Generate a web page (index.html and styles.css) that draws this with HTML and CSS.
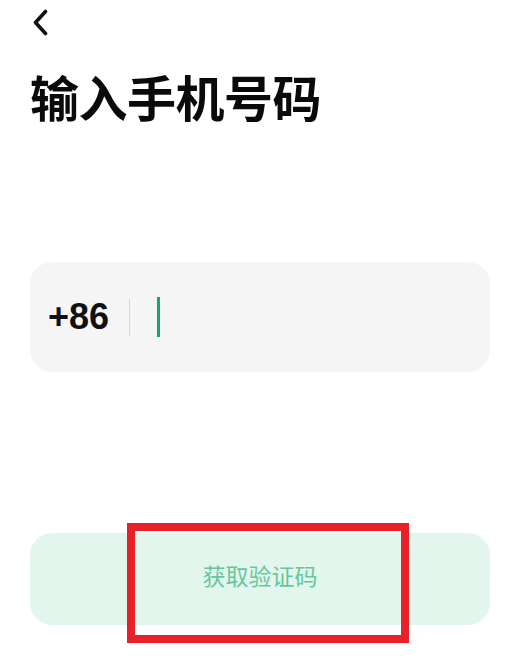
FILE: index.html
```html
<!DOCTYPE html>
<html lang="zh-CN">
<head>
    <meta charset="UTF-8">
    <meta name="viewport" content="width=device-width, initial-scale=1.0">
    <title>输入手机号码</title>
    <link rel="stylesheet" href="styles.css">
</head>
<body>
    <div class="page">
        <div class="top-bar">
            <svg class="back" width="17" height="27" viewBox="0 0 17 27">
                <path d="M13.5 2.5 L3.5 13.5 L13.5 24.5" fill="none" stroke="#111" stroke-width="3.6" stroke-linecap="round" stroke-linejoin="round"/>
            </svg>
        </div>

        <h1 class="title">输入手机号码</h1>

        <div class="phone-field">
            <span class="code">+86</span>
            <span class="divider"></span>
            <span class="caret"></span>
        </div>

        <div class="submit-wrap">
            <button class="submit">获取验证码</button>
            <div class="highlight"></div>
        </div>
    </div>
</body>
</html>
```

FILE: styles.css
```css
body {
    margin: 0;
    background: #fff;
    font-family: "Noto Sans CJK SC", "Noto Sans", sans-serif;
    color: #111;
}

.page {
    width: 510px;
    height: 671px;
    padding: 0 20px 0 30px;
    box-sizing: border-box;
    overflow: hidden;
}

.top-bar {
    height: 46px;
    display: flex;
    align-items: flex-start;
    padding-top: 9px;
    box-sizing: border-box;
}

.back {
    display: block;
    margin-left: 2px;
}

.title {
    margin: 15px 0 0;
    font-size: 49px;
    font-weight: 700;
    line-height: 70px;
    letter-spacing: -0.5px;
    color: #0a0a0a;
}

.phone-field {
    margin-top: 131px;
    height: 110px;
    background-color: #f5f5f5;
    border-radius: 22px;
    display: flex;
    align-items: center;
    padding-left: 18px;
}

.code {
    font-family: "Liberation Sans", Arial, sans-serif;
    font-size: 36px;
    font-weight: 700;
    color: #111;
    line-height: 1;
}

.divider {
    width: 1px;
    height: 37px;
    background-color: #d6d6d6;
    margin-left: 20px;
}

.caret {
    width: 3px;
    height: 40px;
    background-color: #1aa36f;
    margin-left: 27px;
}

.submit-wrap {
    position: relative;
    margin-top: 161px;
}

.submit {
    display: block;
    width: 100%;
    height: 92px;
    padding: 0 0 8px;
    border: none;
    border-radius: 22px;
    background-color: #e2f6ee;
    color: #66c79c;
    font-family: "Noto Sans CJK SC", sans-serif;
    font-size: 23px;
    cursor: pointer;
}

/* annotation box drawn over the button */
.highlight {
    position: absolute;
    left: 97px;
    top: -10px;
    width: 282px;
    height: 120px;
    border: 8px solid #e8202a;
    box-sizing: border-box;
}
```
